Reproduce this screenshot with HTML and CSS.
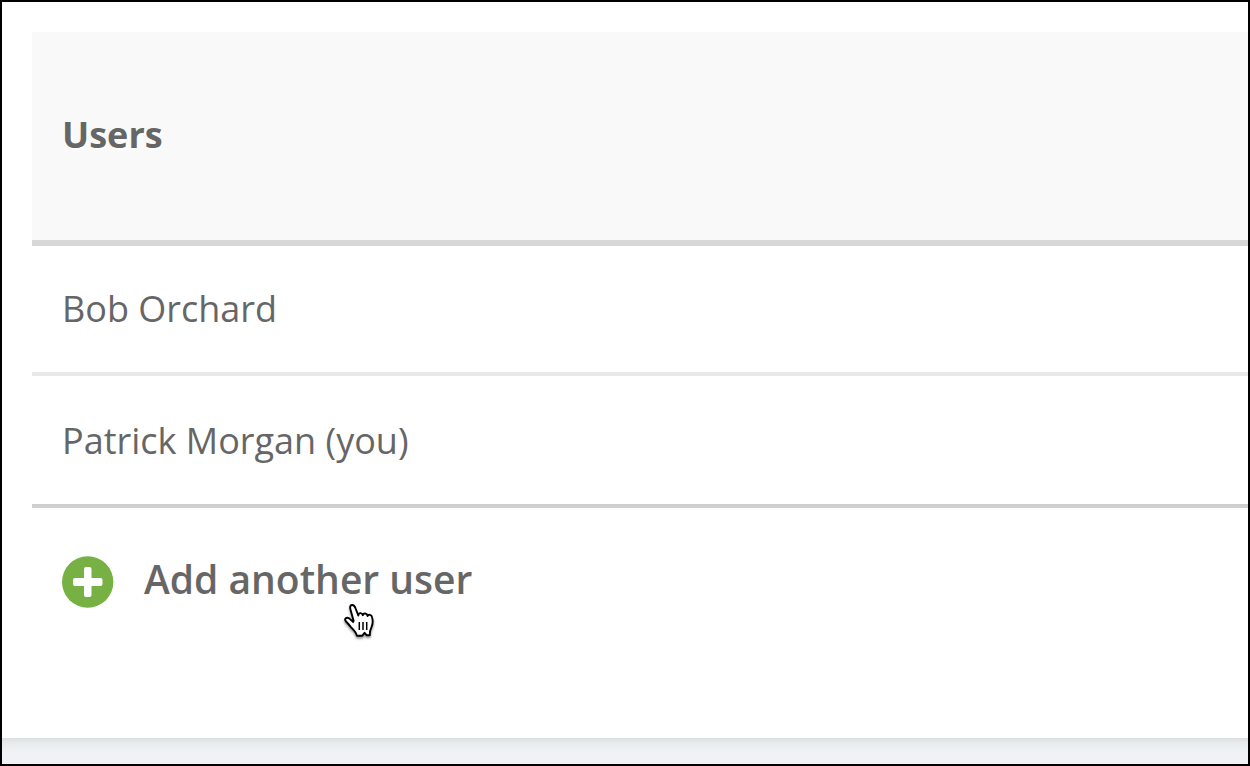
FILE: index.html
```html
<!DOCTYPE html>
<html lang="en">
<head>
<meta charset="utf-8">
<meta name="viewport" content="width=device-width, initial-scale=1">
<title>Users</title>
<link rel="stylesheet" href="styles.css">
</head>
<body>
<main class="panel">
  <table class="users">
    <thead>
      <tr><th scope="col">Users</th></tr>
    </thead>
    <tbody>
      <tr><td>Bob Orchard</td></tr>
      <tr><td>Patrick Morgan (you)</td></tr>
    </tbody>
  </table>
  <button class="add" type="button">
    <svg class="add-icon" viewBox="0 0 52 52" aria-hidden="true">
      <circle cx="25.700" cy="26" r="25.700" fill="#77b043"/>
      <path d="M24 11h3.500a2 2 0 0 1 2 2v9h9a2 2 0 0 1 2 2v4a2 2 0 0 1-2 2h-9v9a2 2 0 0 1-2 2h-3.500a2 2 0 0 1-2-2v-9h-9a2 2 0 0 1-2-2v-4a2 2 0 0 1 2-2h9v-9a2 2 0 0 1 2-2z" fill="#fff"/>
    </svg>
    <span class="add-label">Add another user</span>
    <svg class="cursor" viewBox="0 0 40 42" aria-hidden="true">
      <path d="M12.800 21.500L9.600 10C8.600 6.700 9.300 5.200 11 5C12.700 4.800 13.800 6.200 14.600 8.500L17.300 15.500C17.500 12.500 21 12.200 21.800 15.200C22.500 12.600 26 13 26.600 16C27.400 14 30.600 14.500 31 17.200C32.100 20.500 31.700 24.500 30.300 27.700C29 30.500 28.600 32 28.900 35.200H25.600L23.600 32.800L21.300 35.700H15.800C15.300 32.500 12.700 30 10.400 27.700C8.500 25 7 23.500 5 21.500C2.800 18.700 5.500 16.600 8.200 18.400L12.800 22.500" fill="#fff" stroke="#000" stroke-width="1.900" stroke-linejoin="round"/>
      <path d="M18.300 22v8M22 22v8M25.700 22v8" stroke="#000" stroke-width="1.500"/>
    </svg>
  </button>
</main>
<footer class="page-foot"></footer>
</body>
</html>
```
FILE: styles.css
```css
* {
  box-sizing: border-box;
}

body {
  display: flex;
  flex-direction: column;
  min-height: 100vh;
  margin: 0;
  border: 2px solid #000;
  background: #eff3f5;
  color: #666;
  font-family: "Open Sans", sans-serif;
  font-size: 36px;
  line-height: 50px;
}

.panel {
  flex: 1;
  padding: 30px 0 0 30px;
  background: #fff;
}

.users {
  width: 100%;
  border-spacing: 0;
}

.users th,
.users td {
  padding: 38px 30px;
  text-align: left;
}

.users th {
  padding: 78px 30px 80px;
  border-bottom: 6px solid #d8d8d8;
  background: #f9f9f9;
  font-weight: 700;
  text-shadow: 2px 2px 0 #fff;
}

.users td {
  border-bottom: 4px solid #e9e9e9;
}

.users tbody tr:last-child td {
  padding-top: 40px;
  border-bottom-color: #cfcfcf;
}

.add {
  position: relative;
  display: flex;
  align-items: center;
  gap: 30px;
  margin: 46px 30px 0;
  padding: 0;
  border: 0;
  background: none;
  color: inherit;
  font: inherit;
  font-size: 39px;
  font-weight: 600;
  cursor: pointer;
}

.add-icon {
  width: 52px;
  height: 52px;
}

.add-label {
  padding-bottom: 6px;
}

.cursor {
  position: absolute;
  top: 46px;
  left: 279px;
  width: 40px;
  height: 42px;
  filter: drop-shadow(0 2px 1px rgba(0, 0, 0, 0.4));
}

.page-foot {
  height: 26px;
  background: linear-gradient(#dcdfe0, #e8ebec 5px, #eff3f5 14px);
}
```
